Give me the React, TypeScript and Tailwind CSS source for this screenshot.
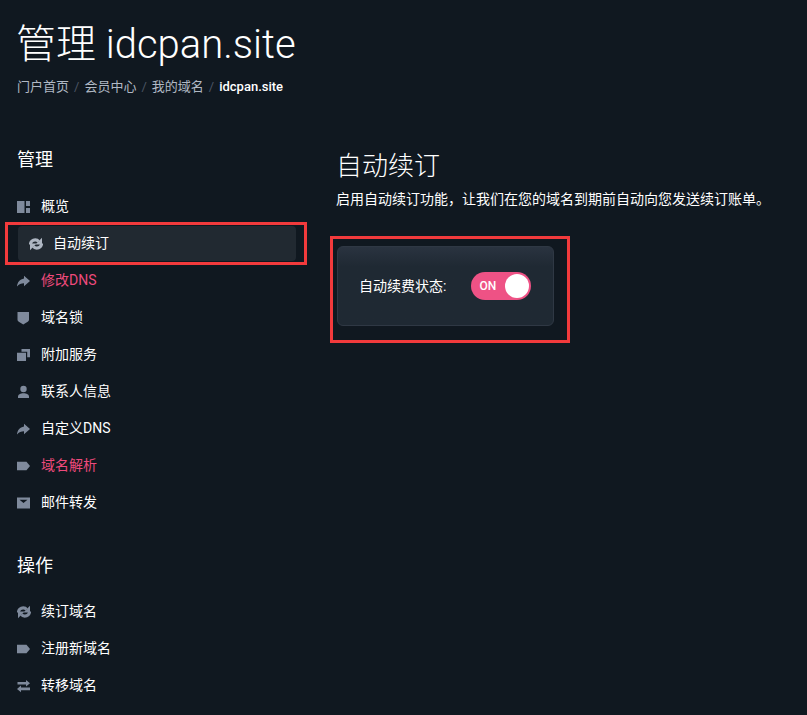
const gray = "#7f8a9c";

function Ic({ children }: { children: React.ReactNode }) {
  return (
    <svg width="14" height="14" viewBox="1 0 14 14" fill={gray} className="shrink-0">
      {children}
    </svg>
  );
}

const Dash = () => (
  <Ic>
    <path d="M1 1h7.500v12H1zM10 1h4v5h-4zM10 8h4v5h-4z" />
  </Ic>
);
const Renew = ({ light }: { light?: boolean }) => {
  const c = light ? "#aeb6c2" : gray;
  return (
    <svg width="14" height="14" viewBox="1 0 14 14" className="shrink-0">
      <path d="M2.500 7.500C2.500 5 4.600 2.900 7.300 2.900c1.400 0 2.500.5 3.300 1.500" fill="none" stroke={c} strokeWidth="3.200" />
      <path d="M13.500 6.500c0 2.500-2.100 4.600-4.800 4.600-1.400 0-2.500-.5-3.300-1.500" fill="none" stroke={c} strokeWidth="3.200" />
      <path d="M14 .8v6.600H7.400z" fill={c} />
      <path d="M2 13.200V6.600h6.600z" fill={c} />
    </svg>
  );
};
const Share = () => (
  <Ic>
    <path d="M8 1.800l6 5.200-6 5.200V9.300C5.200 9.300 2.800 10.200 1 12.600 1.300 8.400 3.800 5.200 8 4.500z" />
  </Ic>
);
const Shield = () => (
  <Ic>
    <path d="M1.500 1h11.500v7.500c0 1-.5 1.700-1.300 2.200L7.250 13.400 2.800 10.700C2 10.200 1.500 9.500 1.500 8.500z" />
  </Ic>
);
const Addons = () => (
  <Ic>
    <path d="M5.500 1H14v8.200h-2.800V3.800H5.500zM1 4.800h9v8.200H1z" />
  </Ic>
);
const Person = () => (
  <Ic>
    <circle cx="7.500" cy="4" r="3.200" />
    <path d="M2 13v-1.500C2 9.600 4.500 8.300 7.500 8.300s5.500 1.300 5.500 3.200V13z" />
  </Ic>
);
const Tag = () => (
  <Ic>
    <path d="M1 2.700h9.500L14 7l-3.500 4.300H1z" />
  </Ic>
);
const Mail = () => (
  <Ic>
    <path fillRule="evenodd" d="M1 1.500h13v11H1zM3.500 3.800l4 3.200 4-3.200z" />
  </Ic>
);
const Swap = () => (
  <Ic>
    <path d="M10 1l4 3.200-4 3.200V5.500H1.500v-2.600H10zM5 6.600v2h9v2.600H5v2L1 10z" />
  </Ic>
);

function NavItem({ icon, label, pink }: { icon: React.ReactNode; label: string; pink?: boolean }) {
  return (
    <div className="flex h-[37px] items-center gap-[10px]">
      {icon}
      <span className={pink ? "text-[14px] text-[#ee4a7c]" : "text-[14px] text-white"}>{label}</span>
    </div>
  );
}

export default function App() {
  return (
    <div
      className="h-[715px] w-[807px] overflow-hidden bg-[#101820] px-[17px] text-white"
      style={{ fontFamily: 'Roboto, "Noto Sans CJK SC", sans-serif' }}
    >
      <h1 className="-ml-[1px] pt-[20px] text-[40px] font-light leading-[50px]">管理 idcpan.site</h1>
      <div className="mt-[7px] flex h-[20px] items-center gap-[5px] text-[13px] text-[#b0b8c4]">
        <span>门户首页</span>
        <span className="text-[#4c5563]">/</span>
        <span>会员中心</span>
        <span className="text-[#4c5563]">/</span>
        <span>我的域名</span>
        <span className="text-[#4c5563]">/</span>
        <span className="font-medium text-white">idcpan.site</span>
      </div>

      <div className="mt-[50px] flex">
        <aside className="w-[279px] shrink-0">
          <h3 className="text-[18px] leading-[26px]">管理</h3>
          <nav className="mt-[15px]">
            <NavItem icon={<Dash />} label="概览" />
            <div className="relative mt-[1px]">
              <div className="absolute -top-[4px] -left-[12px] h-[43px] w-[302px] border-[3px] border-[#f23a3c]" />
              <div className="ml-[1px] flex h-[35px] items-center gap-[10px] rounded-[4px] bg-[#212931] pl-[11px]">
                <Renew light />
                <span className="text-[14px] text-white">自动续订</span>
              </div>
            </div>
            <div className="mt-[1px]">
              <NavItem icon={<Share />} label="修改DNS" pink />
            </div>
            <NavItem icon={<Shield />} label="域名锁" />
            <NavItem icon={<Addons />} label="附加服务" />
            <NavItem icon={<Person />} label="联系人信息" />
            <NavItem icon={<Share />} label="自定义DNS" />
            <NavItem icon={<Tag />} label="域名解析" pink />
            <NavItem icon={<Mail />} label="邮件转发" />
          </nav>
          <h3 className="mt-[32px] text-[18px] leading-[26px]">操作</h3>
          <nav className="mt-[14px]">
            <NavItem icon={<Renew />} label="续订域名" />
            <NavItem icon={<Tag />} label="注册新域名" />
            <NavItem icon={<Swap />} label="转移域名" />
          </nav>
        </aside>

        <main className="ml-[40px] min-w-0 flex-1">
          <h2 className="mt-[1px] text-[26px] font-light leading-[36px]">自动续订</h2>
          <p className="mt-[5px] whitespace-nowrap text-[14px] leading-[20px]">
            启用自动续订功能，让我们在您的域名到期前自动向您发送续订账单。
          </p>
          <div className="relative ml-[1px] mt-[37px] w-[217px]">
            <div className="absolute -top-[10px] -left-[7px] h-[107px] w-[240px] border-[3px] border-[#f23a3c]" />
            <div className="flex h-[80px] items-center rounded-[6px] border border-[#2f3844] bg-gradient-to-b from-[#2a3340] to-[#1f2933] to-[25%] pl-[21px]">
              <span className="text-[14px] text-white">自动续费状态:</span>
              <div className="ml-[25px] flex h-[28px] w-[60px] items-center justify-between rounded-full bg-[#ee5285] pl-[8px] pr-[2px]">
                <span className="text-[12px] font-medium text-white">ON</span>
                <span className="h-[24px] w-[24px] rounded-full bg-white" />
              </div>
            </div>
          </div>
        </main>
      </div>
    </div>
  );
}
